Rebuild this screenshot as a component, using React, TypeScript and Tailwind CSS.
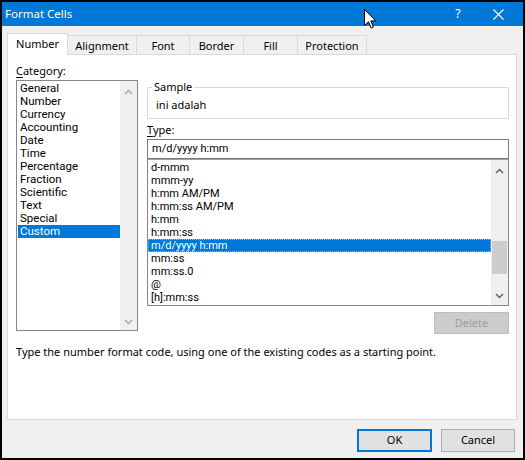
const categories = [
  "General",
  "Number",
  "Currency",
  "Accounting",
  "Date",
  "Time",
  "Percentage",
  "Fraction",
  "Scientific",
  "Text",
  "Special",
  "Custom",
];

const formats = [
  "d-mmm",
  "mmm-yy",
  "h:mm AM/PM",
  "h:mm:ss AM/PM",
  "h:mm",
  "h:mm:ss",
  "m/d/yyyy h:mm",
  "mm:ss",
  "mm:ss.0",
  "@",
  "[h]:mm:ss",
];

const tabs = [
  { label: "Number", w: "w-[61px]" },
  { label: "Alignment", w: "w-[70px]" },
  { label: "Font", w: "w-[54px]" },
  { label: "Border", w: "w-[55px]" },
  { label: "Fill", w: "w-[55px]" },
  { label: "Protection", w: "w-[70px]" },
];

function Chevron({ up, color }: { up?: boolean; color: string }) {
  return (
    <svg width="9" height="6" viewBox="0 0 9 6" className="block">
      <polyline
        points={up ? "1,5 4.5,1.5 8,5" : "1,1 4.5,4.5 8,1"}
        fill="none"
        stroke={color}
        strokeWidth="1.5"
      />
    </svg>
  );
}

function Cursor() {
  return (
    <svg width="13" height="20" viewBox="0 0 13 20" className="absolute left-[362px] top-[7px]">
      <path
        d="M0.5 0.5 L0.5 16.5 L4.5 12.8 L7.2 19 L9.4 18 L6.8 11.9 L11.8 11.9 Z"
        fill="#fff"
        stroke="#000"
        strokeWidth="1"
      />
    </svg>
  );
}

export default function App() {
  return (
    <div className="relative w-[525px] h-[460px] border-2 border-black bg-[#f0f0f0] font-['Noto_Sans',sans-serif] text-[11px] text-black flex flex-col overflow-hidden">
      {/* title bar */}
      <div className="h-[24px] bg-[#0078d7] flex items-center pl-[3px] text-white text-[11.5px]">
        <span className="flex-1">Format Cells</span>
        <span className="w-[20px] text-center text-[12.5px] mr-[25px]">?</span>
        <svg width="11" height="11" viewBox="0 0 11 11" className="mr-[19px]">
          <path d="M0.5 0.5 L10.5 10.5 M10.5 0.5 L0.5 10.5" stroke="#fff" strokeWidth="1.1" />
        </svg>
      </div>
      <Cursor />

      {/* tabs */}
      <div className="mt-[7px] ml-[5px] flex items-end h-[21px] relative z-10">
        {tabs.map((t, i) =>
          i === 0 ? (
            <div
              key={t.label}
              className={`${t.w} h-[22px] -mb-px bg-white border border-b-0 border-[#dadada] flex items-center justify-center pb-[1px]`}
            >
              {t.label}
            </div>
          ) : (
            <div
              key={t.label}
              className={`${t.w} h-[19px] -ml-px bg-[#f0f0f0] border border-b-0 border-[#dadada] flex items-center justify-center pt-[2px]`}
            >
              {t.label}
            </div>
          )
        )}
      </div>

      {/* panel */}
      <div className="ml-[5px] w-[510px] h-[366px] bg-white border border-[#dadada] flex flex-col">
        <div className="flex pl-[8px]">
          {/* left column */}
          <div className="w-[122px] flex flex-col pt-[9px]">
            <div className="h-[14px] leading-[14px]">
              <span className="underline underline-offset-2">C</span>ategory:
            </div>
            <div className="mt-[2px] h-[251px] border border-[#828790] flex">
              <div className="flex-1 pt-px pl-px font-['Roboto',sans-serif] text-[11.5px]">
                {categories.map((c) => (
                  <div
                    key={c}
                    className={`h-[13px] leading-[13px] pl-[2px] ${c === "Custom" ? "bg-[#0078d7] text-white" : ""}`}
                  >
                    {c}
                  </div>
                ))}
              </div>
              <div className="w-[17px] bg-[#f0f0f0] flex flex-col items-center justify-between pt-[8px] pb-[5px]">
                <Chevron up color="#a8a8a8" />
                <Chevron color="#a8a8a8" />
              </div>
            </div>
          </div>

          {/* right column */}
          <div className="ml-[9px] w-[362px] flex flex-col">
            <div className="relative mt-[32px] h-[32px] border border-[#dcdcdc] pl-[8px] pt-[10px] leading-[14px]">
              <span className="absolute -top-[8px] left-[4px] bg-white px-[2px] leading-[14px]">Sample</span>
              ini adalah
            </div>
            <div className="mt-[4px] h-[14px] leading-[14px]">
              <span className="underline underline-offset-2">T</span>ype:
            </div>
            <div className="mt-[2px] h-[20px] border border-[#7a7a7a] pl-[4px] flex items-center font-['Roboto',sans-serif] text-[11px]">
              m/d/yyyy h:mm
            </div>
            <div className="h-[147px] border border-[#828790] border-t-[#a0a0a0] flex font-['Roboto',sans-serif] text-[11px]">
              <div className="flex-1 pt-px">
                {formats.map((f) => (
                  <div
                    key={f}
                    className={`h-[13px] leading-[13px] pl-[3px] ${
                      f === "m/d/yyyy h:mm"
                        ? "bg-[#0078d7] text-white outline outline-1 outline-dotted outline-[#8cc0ee] -outline-offset-1"
                        : ""
                    }`}
                  >
                    {f}
                  </div>
                ))}
              </div>
              <div className="w-[17px] bg-[#f0f0f0] flex flex-col items-center pt-[8px] pb-[6px]">
                <Chevron up color="#606060" />
                <div className="mt-[67px] w-[15px] h-[33px] bg-[#cdcdcd]" />
                <div className="flex-1" />
                <Chevron color="#606060" />
              </div>
            </div>
            <div className="self-end mt-[6px] w-[75px] h-[22px] bg-[#cccccc] border border-[#bfbfbf] flex items-center justify-center text-[#a0a0a0]">
              Delete
            </div>
          </div>
        </div>

        <div className="pl-[8px] mt-[10px] leading-[15px]">
          Type the number format code, using one of the existing codes as a starting point.
        </div>
      </div>

      {/* buttons */}
      <div className="mt-[9px] flex justify-end pr-[8px] gap-[9px]">
        <div className="w-[75px] h-[23px] bg-[#e1e1e1] border-2 border-[#0078d7] flex items-center justify-center">
          OK
        </div>
        <div className="w-[74px] h-[23px] bg-[#e1e1e1] border border-[#adadad] flex items-center justify-center">
          Cancel
        </div>
      </div>
    </div>
  );
}
